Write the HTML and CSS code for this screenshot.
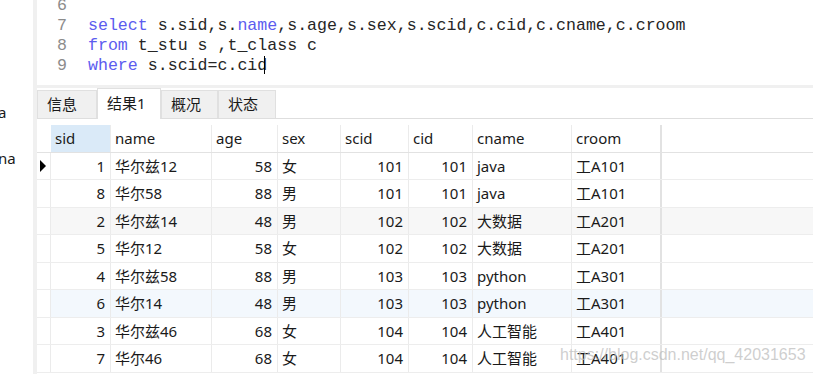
FILE: index.html
```html
<!DOCTYPE html>
<html lang="zh">
<head>
  <meta charset="UTF-8">
  <meta name="viewport" content="width=device-width, initial-scale=1.0">
  <title>查询结果</title>
  <link rel="stylesheet" href="styles.css">
</head>
<body>

  <!-- Side list (cut off) -->
  <div class="sidebar">
    <div class="side-item first">a</div>
    <div class="side-item">na</div>
  </div>

  <div class="main">

    <!-- SQL editor -->
    <div class="editor">
      <div class="gutter">
        <div>6</div>
        <div>7</div>
        <div>8</div>
        <div>9</div>
      </div>
      <div class="code">
        <div class="line">&nbsp;</div>
        <div class="line"><span class="kw">select</span> s.sid,s.<span class="kw">name</span>,s.age,s.sex,s.scid,c.cid,c.cname,c.croom</div>
        <div class="line"><span class="kw">from</span> t_stu s ,t_class c</div>
        <div class="line"><span class="kw">where</span> s.scid=c.cid<span class="caret"></span></div>
      </div>
    </div>

    <!-- Tabs -->
    <div class="tabbar">
      <div class="tab">信息</div>
      <div class="tab active">结果1</div>
      <div class="tab">概况</div>
      <div class="tab">状态</div>
    </div>

    <!-- Result grid -->
    <div class="grid">
      <div class="row head">
        <div class="cell ind"></div>
        <div class="cell sel">sid</div>
        <div class="cell">name</div>
        <div class="cell">age</div>
        <div class="cell">sex</div>
        <div class="cell">scid</div>
        <div class="cell">cid</div>
        <div class="cell">cname</div>
        <div class="cell">croom</div>
      </div>
      <div class="row">
        <div class="cell ind"><span class="arrow"></span></div>
        <div class="cell num">1</div><div class="cell">华尔兹12</div><div class="cell num">58</div><div class="cell">女</div>
        <div class="cell num">101</div><div class="cell num">101</div><div class="cell">java</div><div class="cell">工A101</div>
      </div>
      <div class="row">
        <div class="cell ind"></div>
        <div class="cell num">8</div><div class="cell">华尔58</div><div class="cell num">88</div><div class="cell">男</div>
        <div class="cell num">101</div><div class="cell num">101</div><div class="cell">java</div><div class="cell">工A101</div>
      </div>
      <div class="row alt">
        <div class="cell ind"></div>
        <div class="cell num">2</div><div class="cell">华尔兹14</div><div class="cell num">48</div><div class="cell">男</div>
        <div class="cell num">102</div><div class="cell num">102</div><div class="cell">大数据</div><div class="cell">工A201</div>
      </div>
      <div class="row">
        <div class="cell ind"></div>
        <div class="cell num">5</div><div class="cell">华尔12</div><div class="cell num">58</div><div class="cell">女</div>
        <div class="cell num">102</div><div class="cell num">102</div><div class="cell">大数据</div><div class="cell">工A201</div>
      </div>
      <div class="row">
        <div class="cell ind"></div>
        <div class="cell num">4</div><div class="cell">华尔兹58</div><div class="cell num">88</div><div class="cell">男</div>
        <div class="cell num">103</div><div class="cell num">103</div><div class="cell">python</div><div class="cell">工A301</div>
      </div>
      <div class="row hover">
        <div class="cell ind"></div>
        <div class="cell num">6</div><div class="cell">华尔14</div><div class="cell num">48</div><div class="cell">男</div>
        <div class="cell num">103</div><div class="cell num">103</div><div class="cell">python</div><div class="cell">工A301</div>
      </div>
      <div class="row">
        <div class="cell ind"></div>
        <div class="cell num">3</div><div class="cell">华尔兹46</div><div class="cell num">68</div><div class="cell">女</div>
        <div class="cell num">104</div><div class="cell num">104</div><div class="cell">人工智能</div><div class="cell">工A401</div>
      </div>
      <div class="row">
        <div class="cell ind"></div>
        <div class="cell num">7</div><div class="cell">华尔46</div><div class="cell num">68</div><div class="cell">女</div>
        <div class="cell num">104</div><div class="cell num">104</div><div class="cell">人工智能</div><div class="cell">工A401</div>
      </div>
    </div>
  </div>

  <div class="watermark">https://blog.csdn.net/qq_42031653</div>

</body>
</html>
```

FILE: styles.css
```css
body {
  margin: 0;
  height: 374px;
  overflow: hidden;
  display: flex;
  position: relative;
  background: #ffffff;
  color: #1a1a1a;
  font-family: 'Noto Sans', 'Noto Sans CJK SC', sans-serif;
  font-size: 15px;
}

.sidebar {
  width: 33px;
  flex-shrink: 0;
  overflow: hidden;
}

.sidebar .side-item {
  margin-left: -2px;
  height: 20px;
  line-height: 20px;
}

.sidebar .side-item.first {
  margin-top: 102px;
  margin-bottom: 26px;
}

.main {
  flex: 1;
  display: flex;
  flex-direction: column;
  border-left: 4px solid #f0f0f0;
}

/* editor */
.editor {
  height: 85px;
  flex-shrink: 0;
  overflow: hidden;
  display: flex;
  font-family: 'Liberation Mono', monospace;
  font-size: 16.6px;
  line-height: 20px;
}

.editor .gutter {
  width: 30px;
  padding-right: 4px;
  margin-top: -4px;
  text-align: right;
  color: #8c8c8c;
}

.editor .code {
  margin-top: -4px;
  padding-left: 17px;
  color: #262626;
}

.editor .line {
  white-space: pre;
}

.editor .kw {
  color: #5c5cef;
}

.editor .caret {
  display: inline-block;
  width: 1px;
  height: 18px;
  margin-left: -3px;
  vertical-align: -4px;
  background: #000;
}

/* tabs */
.tabbar {
  display: flex;
  flex-shrink: 0;
  align-items: flex-end;
  height: 30px;
  border-top: 3px solid #f0f0f0;
  border-bottom: 1px solid #dedede;
}

.tab {
  box-sizing: border-box;
  height: 28px;
  padding: 0 9px;
  line-height: 27px;
  background: #f0f0f0;
  border: 1px solid #e0e0e0;
  border-bottom: none;
}

.tab:first-child {
  width: 60px;
}

.tab.active {
  width: 64px;
  height: 31px;
  margin-bottom: -1px;
  line-height: 29px;
  background: #ffffff;
}

.tab:nth-child(3) {
  width: 57px;
}

.tab:nth-child(4) {
  width: 58px;
}

/* result grid */
.grid {
  margin-top: 6px;
}

.row {
  display: grid;
  grid-template-columns: 14px 60px 101px 66px 63px 68px 64px 99px 90px;
  box-sizing: border-box;
  height: 28px;
  border-bottom: 1px solid #ededed;
}

.row:nth-child(even) {
  height: 27px;
}

.row.head {
  height: 28px;
  border-bottom: 1px solid #e2e2e2;
}

.row.alt {
  background: #f7f7f7;
}

.row.hover {
  background: #f3f8fd;
}

.cell {
  box-sizing: border-box;
  padding: 0 4px;
  border-right: 1px solid #ebebeb;
  line-height: 26px;
  white-space: nowrap;
  overflow: hidden;
}

.cell:last-child {
  border-right: 2px solid #e2e2e2;
}

.cell.num {
  text-align: right;
  padding-right: 5px;
}

.cell.ind {
  padding: 0;
  display: flex;
  align-items: center;
  justify-content: center;
  background: #ffffff;
}

.row.head .cell.ind {
  border-right-color: #ffffff;
}

.cell.sel {
  background: #daeaf8;
}

.arrow {
  width: 0;
  height: 0;
  margin-left: -2px;
  border-left: 6px solid #000;
  border-top: 6px solid transparent;
  border-bottom: 6px solid transparent;
}

.watermark {
  position: absolute;
  left: 560px;
  top: 346px;
  font-family: 'Liberation Sans', sans-serif;
  font-size: 16px;
  color: rgba(190, 190, 190, 0.75);
  pointer-events: none;
}
```
